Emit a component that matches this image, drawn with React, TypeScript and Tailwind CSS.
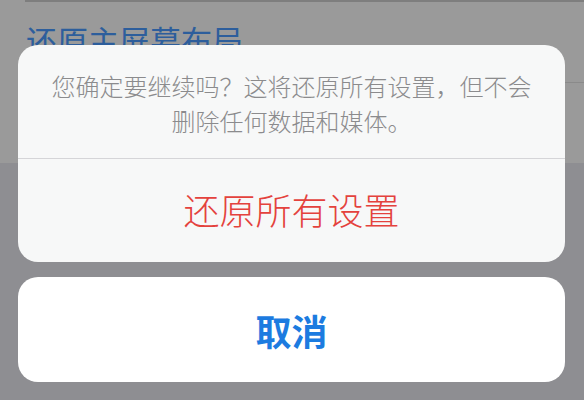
import React from "react";

export default function App() {
  return (
    <div
      className="relative w-[584px] h-[400px] overflow-hidden bg-[#8e8e92]"
      style={{ fontFamily: '"Noto Sans CJK SC", "Noto Sans", sans-serif' }}
    >
      {/* dimmed settings list behind the sheet */}
      <div className="bg-[#9a9a9a]">
        <div className="h-[2px] ml-[25px] bg-[#7e7e7e]" />
        <div className="h-[80px] pl-[26px] pt-[18px] text-[31px] leading-[40px] text-[#2d5e9c]">
          还原主屏幕布局
        </div>
        <div className="h-px ml-[27px] bg-[#8a8a8a]" />
        <div className="h-[80px]" />
      </div>

      {/* action sheet */}
      <div className="absolute inset-0 flex flex-col gap-[15px] px-[18px] pt-[45px]">
        <div className="w-[547px] rounded-[20px] bg-[#f7f8f8] overflow-hidden">
          <div className="h-[113px] pt-[23px] text-center text-[24px] leading-[35px] font-light text-[#8b8b8d]">
            您确定要继续吗？这将还原所有设置，但不会
            <br />
            删除任何数据和媒体。
          </div>
          <div className="h-px bg-[#d5d5d8]" />
          <div className="h-[103px] pb-[4px] flex items-center justify-center text-[36px] font-light text-[#e4423d]">
            还原所有设置
          </div>
        </div>
        <div className="w-[547px] h-[105px] rounded-[20px] bg-white flex items-center justify-center text-[36px] font-semibold text-[#1c7be0]">
          取消
        </div>
      </div>
    </div>
  );
}
